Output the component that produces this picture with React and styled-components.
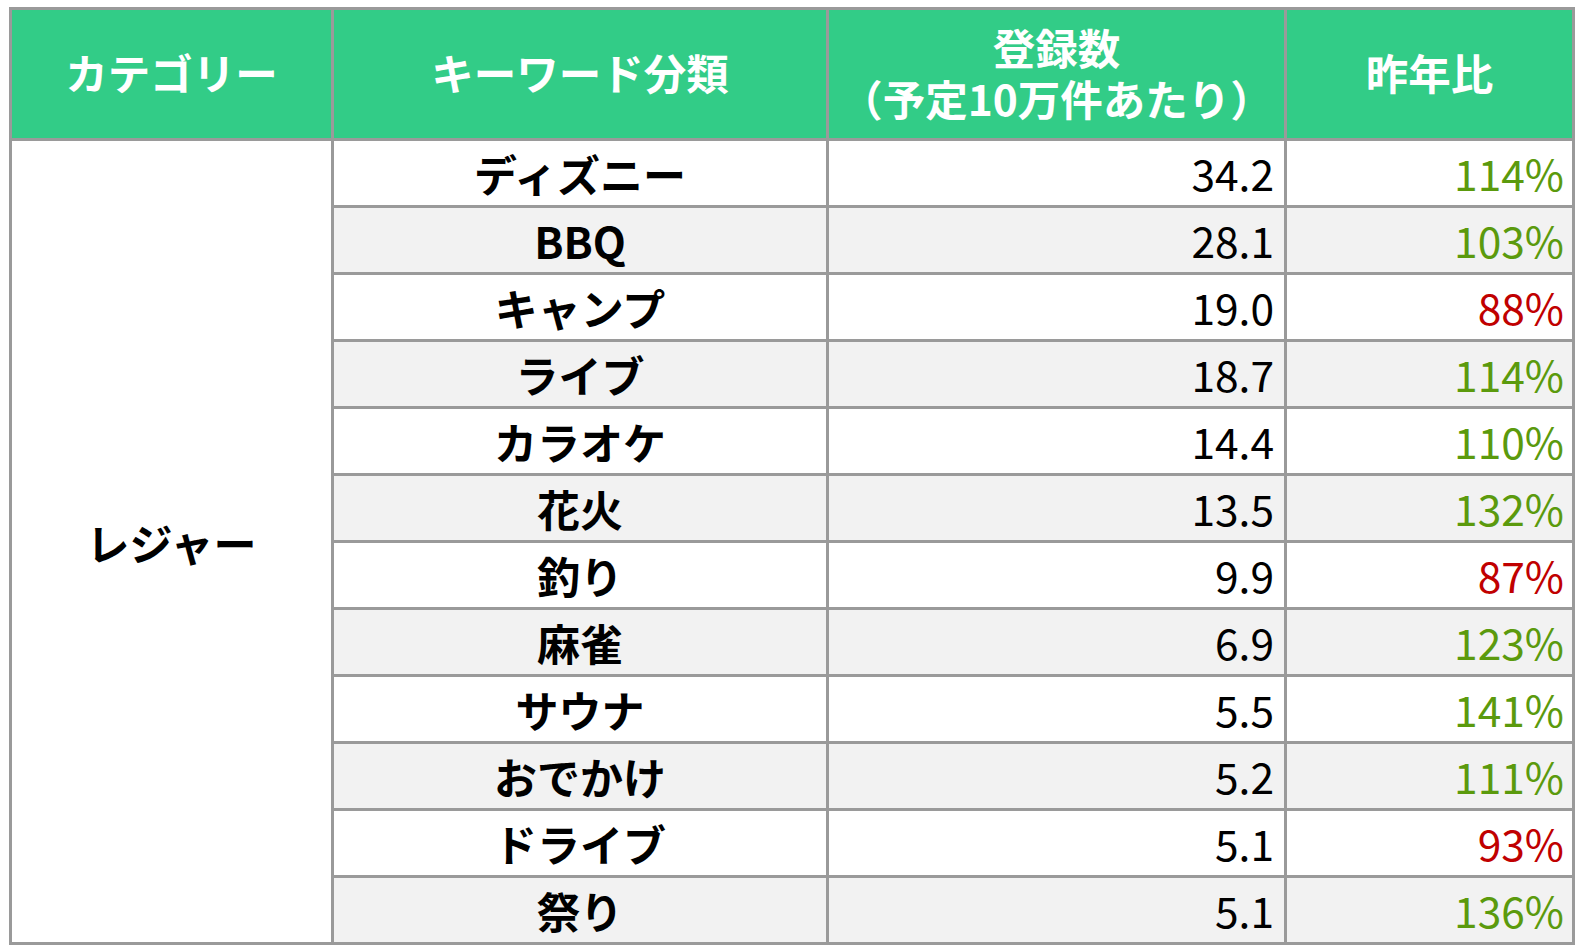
import styled, { createGlobalStyle } from "styled-components";

const GlobalStyle = createGlobalStyle`
  html, body {
    margin: 0;
    padding: 0;
    background: #ffffff;
  }
  body {
    font-family: "Noto Sans CJK JP", "Noto Sans", sans-serif;
  }
`;

const Page = styled.div`
  padding: 7px 9px;
`;

const Table = styled.table`
  width: 1563px;
  border-collapse: collapse;
  table-layout: fixed;
  border: 3px solid #9a9a9a;
  font-family: "Noto Sans CJK JP", "Noto Sans", sans-serif;
`;

const Col = styled.col`
  width: ${({ $w }) => $w}px;
`;

const HeadCell = styled.th`
  height: 123px;
  padding: 0 0 5px;
  background: #32cc87;
  color: #ffffff;
  font-size: 42.5px;
  font-weight: 700;
  line-height: 51px;
  text-align: center;
  border: 3px solid #9a9a9a;
`;

const Row = styled.tr`
  background: ${({ $alt }) => ($alt ? "#f2f2f2" : "#ffffff")};
`;

const Cell = styled.td`
  height: 64px;
  padding: 0 ${({ $pad }) => $pad || 0}px 0 0;
  border: 3px solid #9a9a9a;
  font-size: ${({ $bold }) => ($bold ? 43 : 42.5)}px;
  line-height: 1;
  color: ${({ $color }) => $color || "#000000"};
  font-weight: ${({ $bold }) => ($bold ? 700 : 400)};
  text-align: ${({ $align }) => $align || "center"};
  vertical-align: middle;
`;

const CategoryCell = styled.td`
  background: #ffffff;
  border: 3px solid #9a9a9a;
  font-size: 43px;
  font-weight: 700;
  text-align: center;
  vertical-align: middle;
  padding: 0;
`;

const rows = [
  { k: "ディズニー", n: "34.2", r: 114 },
  { k: "BBQ", n: "28.1", r: 103 },
  { k: "キャンプ", n: "19.0", r: 88 },
  { k: "ライブ", n: "18.7", r: 114 },
  { k: "カラオケ", n: "14.4", r: 110 },
  { k: "花火", n: "13.5", r: 132 },
  { k: "釣り", n: "9.9", r: 87 },
  { k: "麻雀", n: "6.9", r: 123 },
  { k: "サウナ", n: "5.5", r: 141 },
  { k: "おでかけ", n: "5.2", r: 111 },
  { k: "ドライブ", n: "5.1", r: 93 },
  { k: "祭り", n: "5.1", r: 136 },
];

export default function App() {
  return (
    <>
      <GlobalStyle />
      <Page>
        <Table>
          <colgroup>
            <Col $w={322} />
            <Col $w={495} />
            <Col $w={458} />
            <Col $w={288} />
          </colgroup>
          <thead>
            <tr>
              <HeadCell>カテゴリー</HeadCell>
              <HeadCell>キーワード分類</HeadCell>
              <HeadCell>
                登録数
                <br />
                （予定10万件あたり）
              </HeadCell>
              <HeadCell>昨年比</HeadCell>
            </tr>
          </thead>
          <tbody>
            {rows.map((row, i) => (
              <Row key={row.k} $alt={i % 2 === 1}>
                {i === 0 && <CategoryCell rowSpan={rows.length}>レジャー</CategoryCell>}
                <Cell $bold>{row.k}</Cell>
                <Cell $align="right" $pad={10}>
                  {row.n}
                </Cell>
                <Cell $align="right" $pad={8} $color={row.r >= 100 ? "#5b9a0d" : "#c00000"}>
                  {row.r}%
                </Cell>
              </Row>
            ))}
          </tbody>
        </Table>
      </Page>
    </>
  );
}
